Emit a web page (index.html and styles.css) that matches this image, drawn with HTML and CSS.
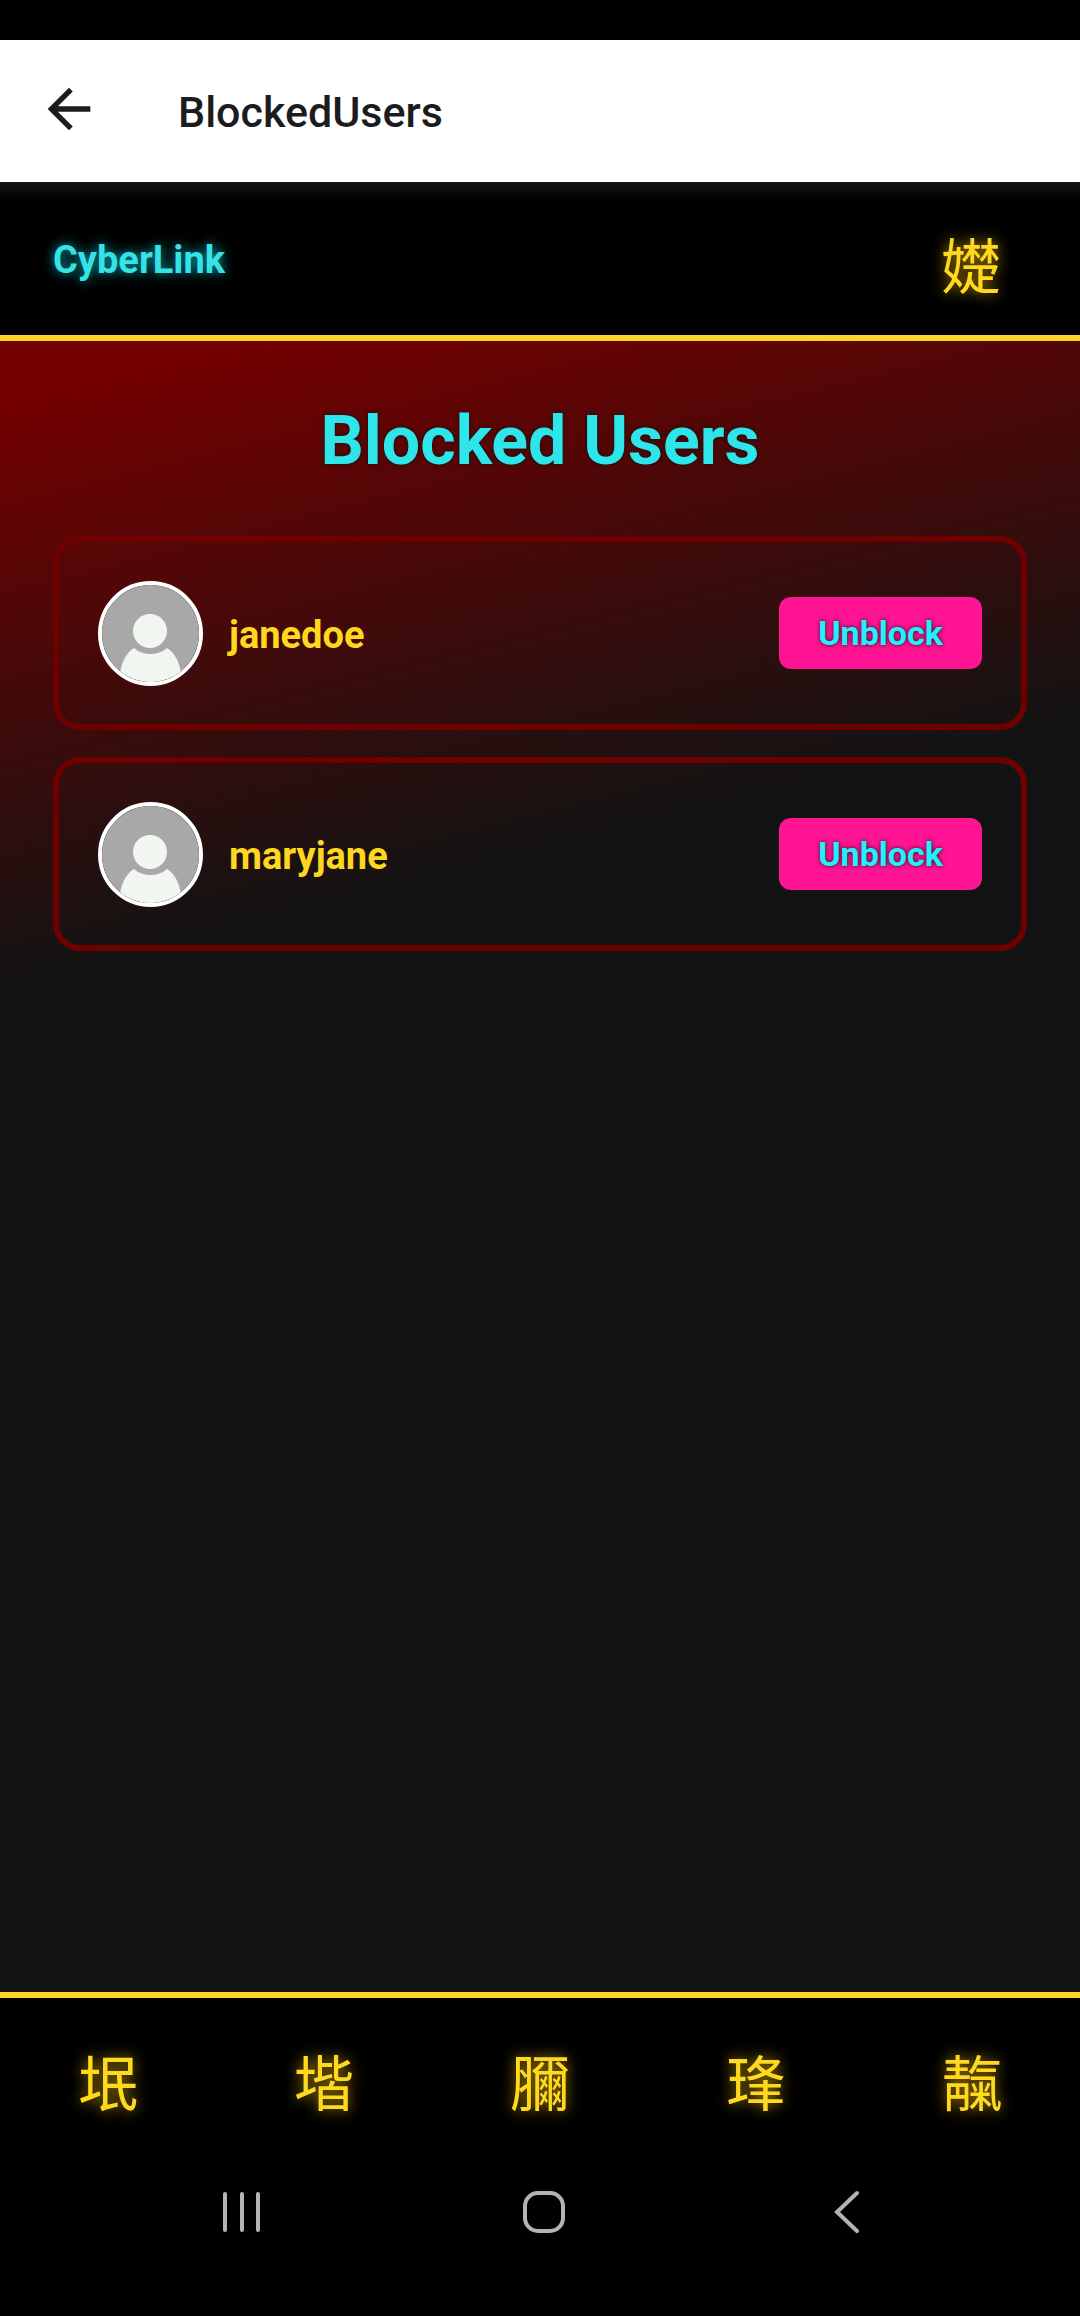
FILE: index.html
```html
<!DOCTYPE html>
<html lang="en">
<head>
<meta charset="utf-8">
<meta name="viewport" content="width=device-width, initial-scale=1">
<title>BlockedUsers</title>
<link rel="stylesheet" href="styles.css">
</head>
<body>
<div class="status-bar"></div>
<div class="app-bar">
  <button class="icon-button back" type="button" aria-label="Back">
    <svg width="64" height="64" viewBox="0 0 24 24"><path fill="#1c1c1e" d="M20 11H7.83l5.59-5.59L12 4l-8 8 8 8 1.41-1.41L7.83 13H20v-2z"/></svg>
  </button>
  <span class="app-bar-title">BlockedUsers</span>
</div>
<header class="header">
  <a class="brand" href="#">CyberLink</a>
  <button class="glyph" type="button" aria-label="Menu">&#x2189f;</button>
</header>
<main class="content">
  <h1 class="title">Blocked Users</h1>
  <ul class="users">
    <li class="user">
      <svg class="avatar" viewBox="0 0 97 97" aria-hidden="true"><rect width="97" height="97" fill="#a8a8a8"/><circle cx="48" cy="46" r="17" fill="#f1f6f1"/><path fill="#f1f6f1" d="M32 63C24 68 18 78 17 97H80C79 78 73 68 65 63C56 71 41 71 32 63Z"/></svg>
      <span class="name">janedoe</span>
      <button class="unblock" type="button">Unblock</button>
    </li>
    <li class="user">
      <svg class="avatar" viewBox="0 0 97 97" aria-hidden="true"><rect width="97" height="97" fill="#a8a8a8"/><circle cx="48" cy="46" r="17" fill="#f1f6f1"/><path fill="#f1f6f1" d="M32 63C24 68 18 78 17 97H80C79 78 73 68 65 63C56 71 41 71 32 63Z"/></svg>
      <span class="name">maryjane</span>
      <button class="unblock" type="button">Unblock</button>
    </li>
  </ul>
</main>
<nav class="tabs">
  <button class="glyph" type="button">垊</button>
  <button class="glyph" type="button">堦</button>
  <button class="glyph" type="button">&#x26888;</button>
  <button class="glyph" type="button">琒</button>
  <button class="glyph" type="button">靝</button>
</nav>
<div class="system-nav">
  <button class="icon-button" type="button" aria-label="Recent apps">
    <svg width="48" height="48" viewBox="0 0 48 48" fill="none" stroke="#b4b4b4" stroke-width="4" stroke-linecap="round"><path d="M8 6V42M25 6V42M41 6V42"/></svg>
  </button>
  <button class="icon-button" type="button" aria-label="Home">
    <svg width="48" height="48" viewBox="0 0 48 48" fill="none" stroke="#b4b4b4" stroke-width="4"><rect x="5" y="5" width="38" height="38" rx="13"/></svg>
  </button>
  <button class="icon-button" type="button" aria-label="Back">
    <svg width="48" height="48" viewBox="0 0 48 48" fill="none" stroke="#b4b4b4" stroke-width="4" stroke-linecap="round"><path d="M34 5L14 24L34 43"/></svg>
  </button>
</div>
</body>
</html>
```

FILE: styles.css
```css
* {
  box-sizing: border-box;
}

body {
  margin: 0;
  min-height: 100vh;
  display: flex;
  flex-direction: column;
  background: #000;
  font-family: Roboto, "Noto Sans CJK JP", "Noto Sans CJK SC", sans-serif;
}

button {
  padding: 0;
  border: 0;
  background: none;
  font-family: inherit;
}

.icon-button svg {
  display: block;
}

.status-bar {
  height: 40px;
}

.app-bar {
  display: flex;
  align-items: center;
  gap: 77px;
  height: 142px;
  padding: 0 37px 4px;
  background: #fff;
}

.app-bar-title {
  padding-top: 6px;
  color: #1c1c1e;
  font-size: 43px;
  font-weight: 500;
  line-height: 56px;
}

.header {
  display: flex;
  align-items: center;
  justify-content: space-between;
  height: 159px;
  padding: 0 79px 0 53px;
  border-bottom: 6px solid #fcd424;
  background: linear-gradient(#141414, #000 18px);
}

.brand {
  padding-top: 2px;
  color: #36e2e6;
  font-size: 38px;
  font-weight: 700;
  line-height: 48px;
  text-decoration: none;
  text-shadow: 0 0 12px #00b4be;
}

.glyph {
  padding-top: 20px;
  color: #ffd91e;
  font-size: 60px;
  line-height: 72px;
  text-shadow: 0 0 14px #b48c00;
}

.content {
  flex: 1;
  padding: 56px 53px 53px;
  background: linear-gradient(166deg, #740000 60px, #131313 630px);
}

.title {
  margin: 0 0 51px;
  color: #2ee6ea;
  font-size: 68px;
  font-weight: 700;
  line-height: 88px;
  text-align: center;
  text-shadow: 0 0 4px #131313;
}

.users {
  display: flex;
  flex-direction: column;
  gap: 27px;
  margin: 0;
  padding: 0;
  list-style: none;
}

.user {
  display: flex;
  align-items: center;
  gap: 26px;
  height: 194px;
  padding: 0 39px;
  border: 6px solid #6e0000;
  border-radius: 27px;
}

.avatar {
  width: 105px;
  height: 105px;
  border: 4px solid #fff;
  border-radius: 50%;
}

.name {
  flex: 1;
  padding-top: 4px;
  color: #ffd71e;
  font-size: 38px;
  font-weight: 700;
  line-height: 48px;
}

.unblock {
  width: 203px;
  height: 72px;
  border-radius: 12px;
  background: #ff1493;
  color: #22f0ff;
  font-size: 34px;
  font-weight: 700;
  text-shadow: 0 0 4px #131313;
}

.tabs {
  display: grid;
  grid-template-columns: repeat(5, 1fr);
  height: 148px;
  padding-top: 14px;
  border-top: 6px solid #fcd424;
}

.system-nav {
  display: flex;
  justify-content: space-around;
  align-items: center;
  height: 176px;
  padding: 0 82px 32px 90px;
}
```
